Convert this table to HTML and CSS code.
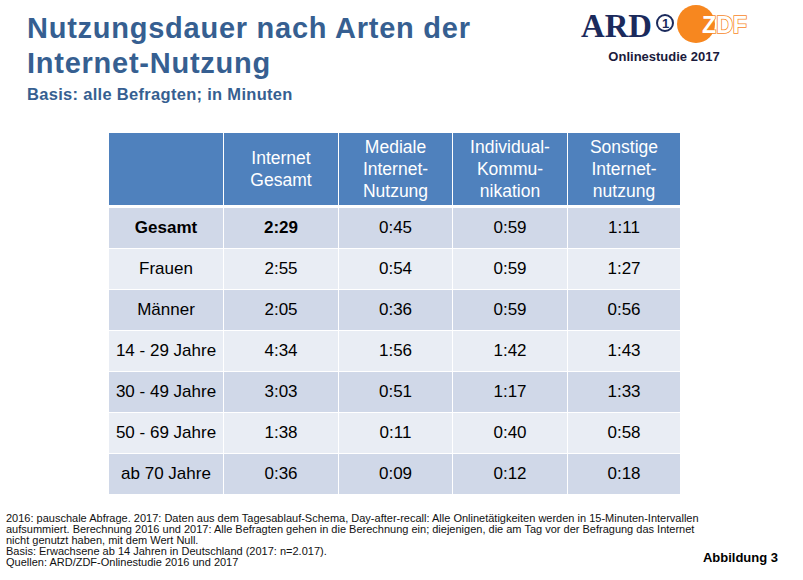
FILE: index.html
```html
<!DOCTYPE html>
<html lang="de">
<head>
<meta charset="utf-8">
<title>Nutzungsdauer nach Arten der Internet-Nutzung</title>
<link rel="stylesheet" href="styles.css">
</head>
<body>
<div class="page">
  <header class="top">
    <div class="titles">
      <h1 class="title">Nutzungsdauer nach Arten der<br>Internet-Nutzung</h1>
      <p class="subtitle">Basis: alle Befragten; in Minuten</p>
    </div>
    <div class="brand">
      <svg class="logo" width="172" height="46" viewBox="0 0 172 46" aria-label="ARD ZDF">
        <text x="3" y="37" class="ard" textLength="71" lengthAdjust="spacingAndGlyphs">ARD</text>
        <circle cx="87" cy="23" r="8" fill="none" stroke="#1b2a5c" stroke-width="2"/>
        <text x="87.5" y="28" class="one" text-anchor="middle">1</text>
        <circle cx="118" cy="24" r="19" fill="#f7871f"/>
        <text x="124" y="33" class="zdf" textLength="45" lengthAdjust="spacingAndGlyphs">ZDF</text>
      </svg>
      <div class="study">Onlinestudie 2017</div>
    </div>
  </header>

  <div class="grid">
    <div class="h"></div>
    <div class="h">Internet<br>Gesamt</div>
    <div class="h">Mediale<br>Internet-<br>Nutzung</div>
    <div class="h">Individual-<br>Kommu-<br>nikation</div>
    <div class="h">Sonstige<br>Internet-<br>nutzung</div>

    <div class="c a b">Gesamt</div><div class="c a b">2:29</div><div class="c a">0:45</div><div class="c a">0:59</div><div class="c a">1:11</div>
    <div class="c e">Frauen</div><div class="c e">2:55</div><div class="c e">0:54</div><div class="c e">0:59</div><div class="c e">1:27</div>
    <div class="c a">Männer</div><div class="c a">2:05</div><div class="c a">0:36</div><div class="c a">0:59</div><div class="c a">0:56</div>
    <div class="c e">14 - 29 Jahre</div><div class="c e">4:34</div><div class="c e">1:56</div><div class="c e">1:42</div><div class="c e">1:43</div>
    <div class="c a">30 - 49 Jahre</div><div class="c a">3:03</div><div class="c a">0:51</div><div class="c a">1:17</div><div class="c a">1:33</div>
    <div class="c e">50 - 69 Jahre</div><div class="c e">1:38</div><div class="c e">0:11</div><div class="c e">0:40</div><div class="c e">0:58</div>
    <div class="c a">ab 70 Jahre</div><div class="c a">0:36</div><div class="c a">0:09</div><div class="c a">0:12</div><div class="c a">0:18</div>
  </div>

  <footer class="foot">
    <p class="notes">2016: pauschale Abfrage. 2017: Daten aus dem Tagesablauf-Schema, Day-after-recall: Alle Onlinetätigkeiten werden in 15-Minuten-Intervallen<br>aufsummiert. Berechnung 2016 und 2017: Alle Befragten gehen in die Berechnung ein; diejenigen, die am Tag vor der Befragung das Internet<br>nicht genutzt haben, mit dem Wert Null.<br>Basis: Erwachsene ab 14 Jahren in Deutschland (2017: n=2.017).<br>Quellen: ARD/ZDF-Onlinestudie 2016 und 2017</p>
    <div class="fig">Abbildung 3</div>
  </footer>
</div>
</body>
</html>
```

FILE: styles.css
```css
html, body {
  margin: 0;
  padding: 0;
  background: #ffffff;
}

.page {
  width: 803px;
  height: 580px;
  box-sizing: border-box;
  padding-bottom: 12px;
  display: flex;
  flex-direction: column;
  font-family: "Liberation Sans", Arial, sans-serif;
  overflow: hidden;
}

.top {
  display: flex;
  justify-content: space-between;
  align-items: flex-start;
  padding: 0 53px 0 27px;
  height: 104px;
}

.titles {
  padding-top: 11px;
}

.title {
  margin: 0;
  font-size: 29px;
  line-height: 35px;
  font-weight: bold;
  letter-spacing: 0.75px;
  color: #365f91;
  white-space: nowrap;
}

.subtitle {
  margin: 3px 0 0;
  font-size: 16.5px;
  line-height: 20px;
  font-weight: bold;
  letter-spacing: 0.3px;
  color: #365f91;
  white-space: nowrap;
}

.brand {
  display: flex;
  flex-direction: column;
  align-items: center;
  width: 172px;
}

.logo {
  display: block;
}

.ard {
  font-family: "Liberation Serif", "Times New Roman", serif;
  font-weight: bold;
  font-size: 34px;
  fill: #1b2a5c;
}

.one {
  font-family: "Liberation Sans", Arial, sans-serif;
  font-weight: bold;
  font-size: 13px;
  fill: #1b2a5c;
}

.zdf {
  font-family: "Liberation Sans", Arial, sans-serif;
  font-weight: bold;
  font-size: 24px;
  fill: #ffffff;
  stroke: #f7871f;
  stroke-width: 1.6px;
  paint-order: stroke;
}

.study {
  margin-top: 3px;
  font-size: 13px;
  line-height: 15px;
  font-weight: bold;
  color: #1a1a3c;
  white-space: nowrap;
}

.grid {
  margin: 29px 0 0 109px;
  display: grid;
  grid-template-columns: 114px 114px 113px 114px 112px;
  grid-template-rows: 74px repeat(7, 40px);
  column-gap: 1px;
  row-gap: 1px;
  width: 571px;
}

.h {
  height: 72px;
  background: #4f81bd;
  color: #ffffff;
  font-size: 17.5px;
  line-height: 22px;
  display: flex;
  align-items: center;
  justify-content: center;
  text-align: center;
}

.c {
  display: flex;
  align-items: center;
  justify-content: center;
  font-size: 17px;
  color: #000000;
  white-space: nowrap;
}

.a {
  background: #d0d8e8;
}

.e {
  background: #e9edf4;
}

.b {
  font-weight: bold;
}

.foot {
  margin-top: auto;
  display: flex;
  justify-content: space-between;
  align-items: flex-end;
  padding: 0 25px 0 6px;
}

.notes {
  margin: 0;
  font-size: 11px;
  line-height: 11px;
  color: #111111;
  white-space: nowrap;
}

.fig {
  margin-bottom: 3px;
  font-size: 13px;
  line-height: 15px;
  font-weight: bold;
  color: #000000;
}
```
